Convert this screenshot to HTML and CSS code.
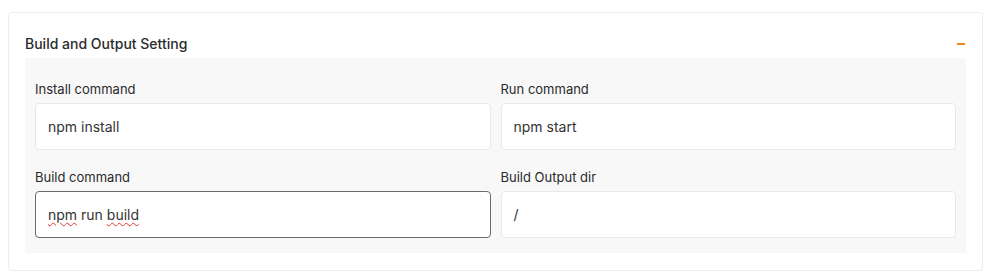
FILE: index.html
```html
<!DOCTYPE html>
<html lang="en">
<head>
<meta charset="utf-8">
<title>Build and Output Setting</title>
<link rel="stylesheet" href="styles.css">
</head>
<body>
  <section class="card">
    <header class="card-header">
      <h2 class="card-title">Build and Output Setting</h2>
      <button class="collapse-btn" type="button" aria-label="Collapse"><span class="minus"></span></button>
    </header>
    <div class="panel">
      <div class="grid">
        <label class="field">
          <span class="field-label">Install command</span>
          <span class="input">npm install</span>
        </label>
        <label class="field">
          <span class="field-label">Run command</span>
          <span class="input">npm start</span>
        </label>
        <label class="field">
          <span class="field-label">Build command</span>
          <span class="input input-focused"><span class="misspelled">npm</span> run <span class="misspelled">build</span></span>
        </label>
        <label class="field">
          <span class="field-label">Build Output dir</span>
          <span class="input">/</span>
        </label>
      </div>
    </div>
  </section>
</body>
</html>
```

FILE: styles.css
```css
* { box-sizing: border-box; }

html, body { background: #ffffff; }

body {
  margin: 0;
  padding: 12px 12px 0 8px;
  font-family: Inter, "Noto Sans", "Liberation Sans", sans-serif;
  color: #333333;
}

.card {
  border: 1px solid #ececec;
  border-radius: 4px;
  padding: 0 16px 16px 16px;
  height: 259px;
}

.card-header {
  height: 45px;
  padding-top: 16px;
  display: flex;
  align-items: center;
  justify-content: space-between;
}

.card-title {
  margin: 0;
  font-size: 14px;
  font-weight: 500;
  line-height: 29px;
  color: #2b2b2b;
}

.collapse-btn {
  border: 0;
  background: none;
  padding: 0;
  width: 18px;
  height: 18px;
  display: flex;
  align-items: center;
  justify-content: flex-end;
  margin-right: 1px;
  cursor: pointer;
}

.minus {
  display: block;
  width: 8px;
  height: 2px;
  background: #f08a1c;
}

.panel {
  background: #f8f8f8;
  padding: 21px 10px 15px 10px;
}

.grid {
  display: grid;
  grid-template-columns: 1fr 1fr;
  column-gap: 10px;
  row-gap: 17px;
}

.field {
  display: flex;
  flex-direction: column;
  gap: 4px;
}

.field-label {
  font-size: 13px;
  line-height: 20px;
  font-weight: 400;
  color: #2a2a2a;
}

.input {
  display: flex;
  align-items: center;
  height: 47px;
  padding: 0 12px;
  background: #ffffff;
  border: 1px solid #e8e8e8;
  border-radius: 4px;
  font-size: 14px;
  color: #333333;
  white-space: pre;
}

.input-focused {
  border-color: #6b6b6b;
}

.misspelled {
  text-decoration: underline wavy #e53935;
  text-decoration-thickness: 1px;
  text-underline-offset: 2px;
}
```
